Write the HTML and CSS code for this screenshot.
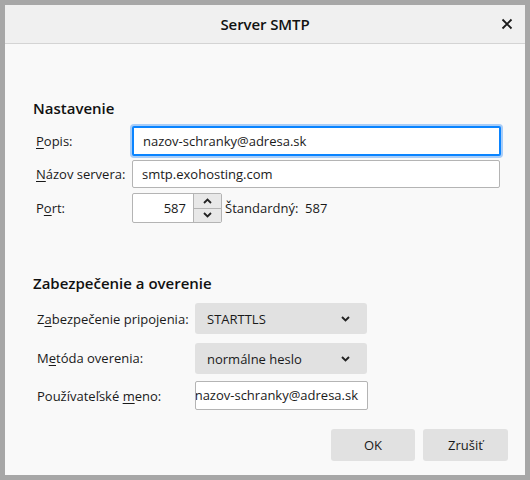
FILE: index.html
```html
<!DOCTYPE html>
<html lang="sk">
<head>
<meta charset="utf-8">
<title>Server SMTP</title>
<link rel="stylesheet" href="styles.css">
</head>
<body>
<div class="window">
  <div class="titlebar">
    <span class="title">Server SMTP</span>
    <span class="close">
      <svg width="12" height="12" viewBox="0 0 12 12"><path d="M1.5 1.5 L10.5 10.5 M10.5 1.5 L1.5 10.5" stroke="#1a1a1a" stroke-width="1.8" fill="none"/></svg>
    </span>
  </div>
  <div class="content">
    <section class="sec sec1">
      <h2 class="heading">Nastavenie</h2>
      <div class="grid grid1">
        <label class="lbl r1"><u>P</u>opis:</label>
        <div class="input focused r1">nazov-schranky@adresa.sk</div>
        <label class="lbl r2"><u>N</u>ázov servera:</label>
        <div class="input r2">smtp.exohosting.com</div>
        <label class="lbl r3">P<u>o</u>rt:</label>
        <div class="portrow r3">
          <div class="port">
            <span class="portval">587</span>
            <span class="spin">
              <span class="spinbtn"><svg width="9" height="6" viewBox="0 0 9 6"><path d="M1 5 L4.5 1.5 L8 5" stroke="#222" stroke-width="1.8" fill="none"/></svg></span>
              <span class="spinbtn"><svg width="9" height="6" viewBox="0 0 9 6"><path d="M1 1 L4.5 4.5 L8 1" stroke="#222" stroke-width="1.8" fill="none"/></svg></span>
            </span>
          </div>
          <span class="std">Štandardný:&nbsp; 587</span>
        </div>
      </div>
    </section>
    <section class="sec sec2">
      <h2 class="heading">Zabezpečenie a overenie</h2>
      <div class="grid grid2">
        <label class="lbl s1">Z<u>a</u>bezpečenie pripojenia:</label>
        <div class="select s1"><span>STARTTLS</span><svg class="chev" width="9" height="6" viewBox="0 0 9 6"><path d="M1 1 L4.5 4.5 L8 1" stroke="#222" stroke-width="1.9" fill="none"/></svg></div>
        <label class="lbl s2">M<u>e</u>tóda overenia:</label>
        <div class="select s2"><span>normálne heslo</span><svg class="chev" width="9" height="6" viewBox="0 0 9 6"><path d="M1 1 L4.5 4.5 L8 1" stroke="#222" stroke-width="1.9" fill="none"/></svg></div>
        <label class="lbl s3">Používateľské <u>m</u>eno:</label>
        <div class="input user s3"><span class="scroll">nazov-schranky@adresa.sk</span></div>
      </div>
    </section>
    <div class="buttons">
      <button class="btn ok">OK</button>
      <button class="btn cancel">Zrušiť</button>
    </div>
  </div>
</div>
</body>
</html>
```
FILE: styles.css
```css
html, body {
  margin: 0;
  padding: 0;
}
body {
  background: #a7a7a7;
  width: 530px;
  height: 480px;
  padding: 5px;
  box-sizing: border-box;
  font-family: "Open Sans", "Noto Sans", sans-serif;
  font-size: 13px;
  color: #1a1a1a;
}
.window {
  width: 520px;
  height: 470px;
  background: #f9f9f9;
  display: flex;
  flex-direction: column;
}
.titlebar {
  height: 38px;
  background: #f0f0f0;
  border-bottom: 1px solid #d4d4d4;
  display: flex;
  align-items: center;
  justify-content: center;
  position: relative;
}
.title {
  font-size: 15px;
  font-weight: 600;
  color: #111;
  letter-spacing: -0.1px;
}
.close {
  position: absolute;
  right: 12px;
  top: 13px;
  width: 12px;
  height: 12px;
  display: flex;
}
.content {
  flex: 1;
  padding: 54px 24px 0 28px;
  display: flex;
  flex-direction: column;
}
.heading {
  margin: 0;
  font-size: 15px;
  font-weight: 600;
  line-height: 20px;
  color: #111;
}
.grid {
  display: grid;
  align-items: center;
}
.grid1 {
  grid-template-columns: 99px 1fr;
  margin-top: 8px;
  row-gap: 4px;
}
.grid2 {
  grid-template-columns: 162px 172px;
  margin-top: 10px;
  row-gap: 8px;
}
.lbl {
  padding-left: 3px;
  line-height: 18px;
}
.sec2 .lbl {
  padding-left: 4px;
}
.input {
  box-sizing: border-box;
  background: #fff;
  border: 1px solid #b4b4b4;
  border-radius: 2px;
  height: 28px;
  line-height: 26px;
  padding: 0 9px;
  white-space: nowrap;
  overflow: hidden;
}
.input.focused {
  height: 30px;
  line-height: 26px;
  border: 2px solid #0a84ff;
  box-shadow: 0 0 0 2px #a8cdf8;
}
.input.r2 {
  margin-right: 1px;
}
.portrow {
  display: flex;
  align-items: center;
  margin-top: 1px;
}
.port {
  box-sizing: border-box;
  width: 90px;
  height: 30px;
  background: #fff;
  border: 1px solid #b4b4b4;
  border-radius: 2px;
  display: flex;
  align-items: stretch;
}
.portval {
  flex: 1;
  text-align: right;
  line-height: 28px;
  padding-right: 7px;
}
.spin {
  width: 27px;
  display: flex;
  flex-direction: column;
  border-left: 1px solid #b4b4b4;
}
.spinbtn {
  flex: 1;
  background: #e8e8e8;
  display: flex;
  align-items: center;
  justify-content: center;
}
.spinbtn + .spinbtn {
  border-top: 1px solid #b4b4b4;
}
.std {
  margin-left: 3px;
}
.sec2 {
  margin-top: 50px;
}
.select {
  box-sizing: border-box;
  height: 31px;
  background: #e1e1e1;
  border-radius: 3px;
  display: flex;
  align-items: center;
  justify-content: space-between;
  padding: 0 17px 0 12px;
}
.chev {
  display: block;
}
.select.s2 {
  margin-top: 1px;
}
.input.user {
  height: 29px;
  line-height: 27px;
  padding: 0 9px;
  margin-right: -1px;
  margin-top: -1px;
  display: flex;
  justify-content: flex-end;
}
.scroll {
  flex: none;
}
.buttons {
  display: flex;
  justify-content: flex-end;
  gap: 8px;
  margin-top: 19px;
  margin-right: -7px;
}
.btn {
  font-family: inherit;
  font-size: 13px;
  color: #1a1a1a;
  background: #e1e1e1;
  border: none;
  border-radius: 3px;
  height: 32px;
  width: 84px;
  padding: 0;
}
.btn.cancel {
  width: 85px;
}
u {
  text-decoration-thickness: 1px;
  text-underline-offset: 2px;
}
```
